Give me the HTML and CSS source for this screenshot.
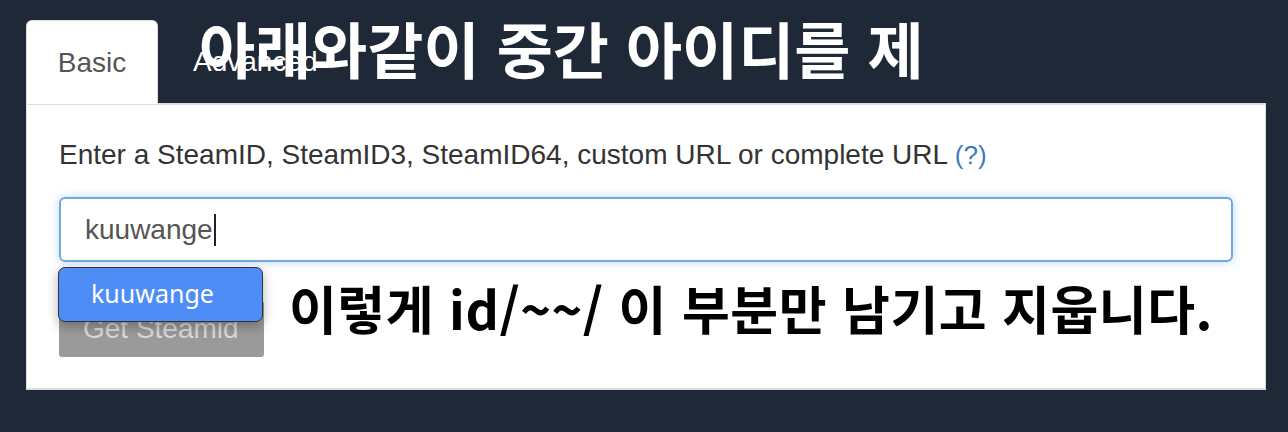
FILE: index.html
```html
<!DOCTYPE html>
<html lang="ko">
<head>
<meta charset="utf-8">
<link rel="stylesheet" href="styles.css">
</head>
<body>
<div class="page">
  <div class="tabs">
    <div class="tab active">Basic</div>
    <div class="tab">Advanced</div>
  </div>
  <div class="panel">
    <p class="label">Enter a SteamID, SteamID3, SteamID64, custom URL or complete URL <span class="help">(?)</span></p>
    <div class="input"><span class="value">kuuwange</span><span class="caret"></span></div>
    <button class="btn" disabled>Get Steamid</button>
    <div class="suggest">kuuwange</div>
    <div class="note">이렇게 id/~~/ 이 부분만 남기고 지웁니다.</div>
  </div>
  <div class="heading">아래와같이 중간 아이디를 제</div>
</div>
</body>
</html>
```
FILE: styles.css
```css
html, body {
  margin: 0;
  padding: 0;
}
body {
  background: #1e2837;
  width: 1288px;
  height: 432px;
  overflow: hidden;
  font-family: "Liberation Sans", Arial, sans-serif;
}
.page {
  position: relative;
  padding: 20px 22px 0 26px;
}
.tabs {
  display: flex;
  height: 83px;
}
.tab {
  font-size: 28px;
  line-height: 84px;
  padding: 0 35px;
  color: #fff;
}
.tab.active {
  width: 132px;
  box-sizing: border-box;
  padding: 0;
  text-align: center;
  background: #fff;
  color: #555;
  border: 1px solid #ddd;
  border-bottom: none;
  border-radius: 6px 6px 0 0;
  line-height: 84px;
  position: relative;
  z-index: 1;
  height: 84px;
}
.panel {
  position: relative;
  width: 1240px;
  height: 287px;
  box-sizing: border-box;
  background: #fff;
  border: 1px solid #ddd;
  border-top: 2px solid #ddd;
  border-bottom: 2px solid #ddd;
  padding: 30px 32px 0 32px;
}
.label {
  margin: 0;
  font-size: 28px;
  line-height: 39px;
  color: #333;
}
.help {
  color: #3a7bbf;
  font-size: 26px;
}
.input {
  margin-top: 22px;
  height: 65px;
  box-sizing: border-box;
  border: 2px solid #6ea9e3;
  border-radius: 6px;
  box-shadow: 0 0 10px rgba(102, 175, 233, 0.45);
  display: flex;
  align-items: center;
  padding-left: 24px;
  font-size: 28px;
  color: #555;
}
.caret {
  display: inline-block;
  width: 2px;
  height: 32px;
  background: #222;
  margin-left: 1px;
}
.btn {
  display: block;
  margin-top: 39px;
  width: 205px;
  height: 56px;
  border: none;
  border-radius: 3px;
  background: #9a9a9a;
  color: #d9d9d9;
  font-family: "Liberation Sans", Arial, sans-serif;
  font-size: 28px;
  text-align: left;
  padding-left: 24px;
}
.suggest {
  position: absolute;
  left: 31px;
  top: 162px;
  width: 205px;
  height: 55px;
  box-sizing: border-box;
  background: #4e8df5;
  border: 1px solid #333;
  border-radius: 7px;
  box-shadow: 0 4px 12px rgba(0,0,0,0.3);
  color: #fff;
  font-family: "Noto Sans", sans-serif;
  font-size: 25px;
  line-height: 50px;
  padding-left: 32px;
}
.note {
  position: absolute;
  left: 262px;
  top: 173px;
  font-family: "Noto Sans CJK KR", "Noto Sans", sans-serif;
  font-weight: 700;
  font-size: 52px;
  letter-spacing: 0.5px;
  line-height: 60px;
  color: #000;
  white-space: nowrap;
}
.heading {
  position: absolute;
  left: 199px;
  top: 8px;
  font-family: "Noto Sans CJK KR", "Noto Sans", sans-serif;
  font-weight: 700;
  font-size: 61px;
  line-height: 80px;
  color: #fff;
  white-space: nowrap;
}
```
